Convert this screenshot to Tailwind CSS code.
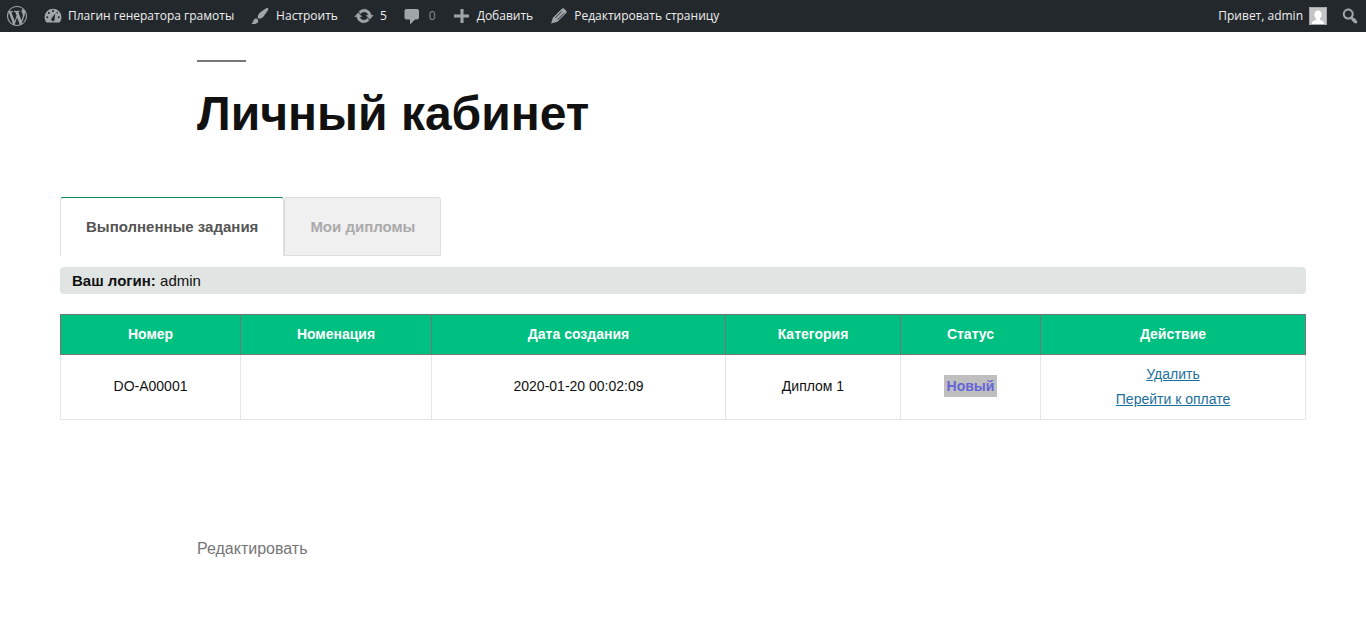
<!DOCTYPE html>
<html lang="ru">
<head>
<meta charset="utf-8">
<meta name="viewport" content="width=device-width, initial-scale=1">
<title>Личный кабинет</title>
<script src="https://cdn.jsdelivr.net/npm/@tailwindcss/browser@4"></script>
</head>
<body class="bg-white text-[#111] font-['Liberation_Sans',Arial,sans-serif]">
<header class="flex h-8 items-center justify-between bg-[#23282d] pl-[7px] pr-[6px] font-['Open_Sans','Noto_Sans',sans-serif] text-xs text-[#eee]">
  <nav class="flex items-center gap-4 whitespace-nowrap" aria-label="Панель администратора">
    <a href="#" aria-label="WordPress" class="text-[#a0a5aa]"><svg class="size-5" viewBox="0 0 20 20" fill="currentColor"><path d="M20 10c0-5.51-4.49-10-10-10C4.48 0 0 4.49 0 10c0 5.52 4.48 10 10 10 5.51 0 10-4.48 10-10zM7.78 15.37L4.37 6.22c.55-.02 1.17-.08 1.17-.08.5-.06.44-1.13-.06-1.11 0 0-1.45.11-2.37.11-.18 0-.37 0-.58-.01C4.12 2.69 6.87 1.11 10 1.11c2.33 0 4.45.87 6.05 2.34-.68-.11-1.65.39-1.65 1.58 0 .74.45 1.36.9 2.1.35.61.55 1.36.55 2.46 0 1.49-1.4 5-1.4 5l-3.03-8.37c.54-.02.82-.17.82-.17.5-.05.44-1.25-.06-1.22 0 0-1.44.12-2.38.12-.87 0-2.33-.12-2.33-.12-.5-.03-.56 1.2-.06 1.22l.92.08 1.26 3.41zM17.41 10c.24-.64.74-1.87.43-4.25.7 1.29 1.05 2.71 1.05 4.25 0 3.29-1.73 6.24-4.4 7.78.97-2.59 1.94-5.2 2.92-7.78zM6.1 18.09C3.12 16.65 1.11 13.53 1.11 10c0-1.3.23-2.48.72-3.59C3.25 10.3 4.67 14.2 6.1 18.09zm4.03-6.63l2.58 6.98c-.86.29-1.76.45-2.71.45-.79 0-1.57-.11-2.29-.33.81-2.38 1.62-4.74 2.42-7.10z"/></svg></a>
    <a href="#" class="flex items-center gap-[5px]"><svg class="size-5 text-[#a0a5aa]" viewBox="0 0 20 20" fill="currentColor" fill-rule="evenodd"><path d="M3.4 16.5h13.2A8.9 8.9 0 0 0 18.500 11.200A8.500 8.500 0 0 0 1.500 11.200A8.900 8.900 0 0 0 3.400 16.500zM10 4a1 1 0 1 1 0 2 1 1 0 0 1 0-2zM5.900 5.900a1 1 0 1 1 0 2 1 1 0 0 1 0-2zM14.100 5.900a.8.8 0 1 1 0 1.600.8.8 0 0 1 0-1.600zM4.200 10.300a1 1 0 1 1 0 2 1 1 0 0 1 0-2zM15.800 10.300a1 1 0 1 1 0 2 1 1 0 0 1 0-2zM12.300 7.400l-.7 5a1.800 1.800 0 1 1-2.600-.6z"/></svg><span>Плагин генератора грамоты</span></a>
    <a href="#" class="flex items-center gap-[6px]"><svg class="size-5 text-[#a0a5aa]" viewBox="0 0 20 20" fill="currentColor"><path d="M18.33 3.57s.27-.8-.31-1.36c-.53-.52-1.22-.24-1.22-.24-.61.3-5.76 3.47-7.67 5.57-.86.96-2.06 3.79-1.09 4.82.92.98 3.96-.17 4.79-1 2.06-2.06 5.21-7.17 5.5-7.79zM1.4 17.65c2.37-1.56 1.46-3.41 3.23-4.64.93-.65 2.22-.62 3.08.29.63.67.8 2.57-.16 3.46-1.57 1.45-4 1.55-6.15.89z"/></svg><span>Настроить</span></a>
    <a href="#" class="flex items-center gap-[6px]"><svg class="size-5 text-[#a0a5aa]" viewBox="0 0 20 20" fill="currentColor" stroke="currentColor" stroke-width=".5"><path d="M10.2 3.28c3.53 0 6.43 2.61 6.92 6h2.08l-3.5 4-3.5-4h2.32c-.45-1.97-2.21-3.45-4.32-3.45-1.45 0-2.73.71-3.54 1.78L4.95 5.66C6.23 4.2 8.11 3.28 10.2 3.28zm-.4 13.44c-3.52 0-6.43-2.61-6.92-6H.8l3.5-4c1.17 1.33 2.33 2.67 3.5 4H5.48c.45 1.97 2.21 3.45 4.32 3.45 1.45 0 2.73-.71 3.54-1.78l1.71 1.95c-1.28 1.46-3.15 2.38-5.25 2.38z"/></svg><span>5</span></a>
    <a href="#" class="flex items-center gap-[6px]"><svg class="size-5 text-[#a0a5aa]" viewBox="0 0 20 20" fill="currentColor"><path d="M3.500 3h10.500c1.100 0 2 .9 2 2v6.500c0 1.100-.9 2-2 2h-2L7 18.500v-5H3.500c-1.100 0-2-.9-2-2V5c0-1.100.9-2 2-2z"/></svg><span class="text-[#8a8e92]">0</span></a>
    <a href="#" class="flex items-center gap-[5px]"><svg class="size-5 text-[#a0a5aa]" viewBox="0 0 20 20" fill="currentColor"><path d="M17 8.500v3h-5.500V17h-3v-5.500H2v-3h6.500V3h3v5.500z"/></svg><span>Добавить</span></a>
    <a href="#" class="flex items-center gap-[5px]"><svg class="size-5 text-[#a0a5aa]" viewBox="0 0 20 20" fill="currentColor"><path d="M13.100 2.600q.9-.8 1.900 0l2.400 2.400q.8.900 0 1.800L8.500 15.700 2 17.500 3.900 11.700z"/><path d="M6.200 12L12.700 5.500M8.500 13.800L15 7.300" fill="none" stroke="#23282d" stroke-width=".9"/></svg><span>Редактировать страницу</span></a>
  </nav>
  <div class="flex items-center gap-[13px] whitespace-nowrap">
    <a href="#" class="flex items-center gap-[6px]"><span>Привет, admin</span><svg class="size-[18px]" viewBox="0 0 18 18"><path fill="#c3c4c5" d="M0 0h18v18H0z"/><path fill="#fff" d="M9 3.500c2.300 0 3.600 1.600 3.600 3.900 0 1.700-.7 3.300-1.700 4.100v1.200c1.700.5 3.300 1.200 4 2.500V17H3v-1.800c.8-1.300 2.400-2 4.100-2.500v-1.200c-1-.8-1.700-2.400-1.700-4.100C5.400 5.100 6.700 3.500 9 3.500z"/><path fill="none" stroke="#a5a8aa" d="M.5.5h17v17H.5z"/></svg></a>
    <button type="button" aria-label="Поиск" class="text-[#a0a5aa]"><svg class="size-5" viewBox="0 0 20 20" fill="currentColor"><path d="M12.14 4.18c1.87 1.87 2.11 4.75.72 6.89.12.1.22.21.36.31.2.16.47.36.81.59.34.24.56.39.66.47.42.31.73.57.94.78.32.32.6.65.84 1 .25.35.44.69.59 1.04.14.35.21.68.18 1-.02.32-.14.59-.36.81s-.49.34-.81.36c-.31.02-.65-.04-.99-.19-.35-.14-.7-.34-1.04-.59-.35-.24-.68-.52-1-.84-.21-.21-.47-.52-.77-.93-.1-.13-.25-.35-.47-.66-.22-.32-.4-.57-.56-.78-.16-.2-.29-.35-.44-.5-2.07 1.09-4.69.76-6.44-.98-2.14-2.15-2.14-5.64 0-7.78 2.15-2.15 5.63-2.15 7.78 0zm-1.41 6.36c1.36-1.37 1.36-3.58 0-4.95-1.37-1.37-3.59-1.37-4.95 0-1.37 1.37-1.37 3.58 0 4.95 1.36 1.37 3.58 1.37 4.95 0z"/></svg></button>
  </div>
</header>
<main class="px-[60px] pb-14 pt-7">
  <div class="pl-[137px]">
    <div class="h-[2px] w-[49px] bg-[#767676]"></div>
    <h1 class="mt-6 text-5xl/[56px] font-bold">Личный кабинет</h1>
  </div>
  <div role="tablist" class="mt-[55px] flex text-[15px] font-bold">
    <button type="button" role="tab" aria-selected="true" class="h-[59px] rounded-t-[3px] border-x border-t border-x-[#ddd] border-t-[#0f8a55] px-[25px] text-[#555]">Выполненные задания</button>
    <button type="button" role="tab" aria-selected="false" class="h-[59px] rounded-t-[3px] border border-[#ddd] bg-[#f0f0f0] px-[25px] pt-px text-[#aaa]">Мои дипломы</button>
  </div>
  <p class="mt-[11px] rounded bg-[#e0e5e3] px-3 text-[15px] leading-[27px]"><b>Ваш логин:</b> admin</p>
  <table class="mt-5 w-full border-collapse text-center text-sm">
    <colgroup><col class="w-[180px]"><col class="w-[191px]"><col class="w-[294px]"><col class="w-[175px]"><col class="w-[140px]"><col class="w-[265px]"></colgroup>
    <thead>
      <tr class="h-10 bg-[#00c081] text-white">
        <th class="border border-[#767676] pb-[2px]">Номер</th>
        <th class="border border-[#767676] pb-[2px]">Номенация</th>
        <th class="border border-[#767676] pb-[2px]">Дата создания</th>
        <th class="border border-[#767676] pb-[2px]">Категория</th>
        <th class="border border-[#767676] pb-[2px]">Статус</th>
        <th class="border border-[#767676] pb-[2px]">Действие</th>
      </tr>
    </thead>
    <tbody>
      <tr class="h-[65px]">
        <td class="border border-[#e5e7e7] pb-[2px]">DO-A00001</td>
        <td class="border border-[#e5e7e7] pb-[2px]"></td>
        <td class="border border-[#e5e7e7] pb-[2px]">2020-01-20 00:02:09</td>
        <td class="border border-[#e5e7e7] pb-[2px]">Диплом 1</td>
        <td class="border border-[#e5e7e7] pb-[2px]"><span class="inline-block bg-[#bfbfbf] px-[3px] font-bold leading-[22px] text-[#6565d8]">Новый</span></td>
        <td class="border border-[#e5e7e7] leading-[25px] text-[#1b6f9c]"><a href="#" class="underline">Удалить</a><br><a href="#" class="underline">Перейти к оплате</a></td>
      </tr>
    </tbody>
  </table>
  <footer class="pl-[137px] pt-[117px] leading-6 text-[#767676]"><a href="#">Редактировать</a></footer>
</main>
</body>
</html>
